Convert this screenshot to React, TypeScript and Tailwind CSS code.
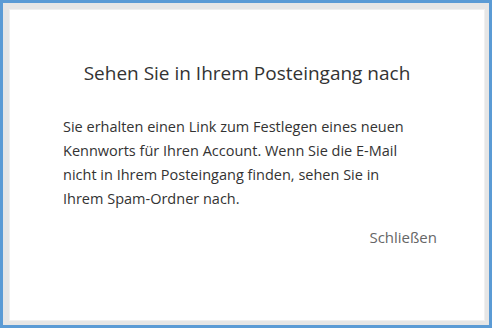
export default function App() {
  return (
    <div className="w-[492px] h-[328px] border-[3px] border-[#5b9bd5] bg-[#e6e6e6] pt-[6px] pl-[6px] pr-[4px] pb-[4px] font-['Open_Sans',sans-serif]">
      <div className="h-full bg-white border border-[#f0f0f0] flex flex-col">
        <h2 className="mt-[49px] text-center text-[19px] leading-[28px] text-[#333333]">
          Sehen Sie in Ihrem Posteingang nach
        </h2>
        <p className="mt-[28px] ml-[53px] w-[358px] text-[14.5px] leading-[24px] text-[#333333]">
          Sie erhalten einen Link zum Festlegen eines neuen Kennworts für Ihren Account. Wenn Sie die E-Mail
          nicht in Ihrem Posteingang finden, sehen Sie in Ihrem Spam-Ordner nach.
        </p>
        <div className="mt-[15px] pr-[47px] flex justify-end">
          <button className="text-[15px] leading-[22px] text-[#666666]">Schließen</button>
        </div>
      </div>
    </div>
  );
}
